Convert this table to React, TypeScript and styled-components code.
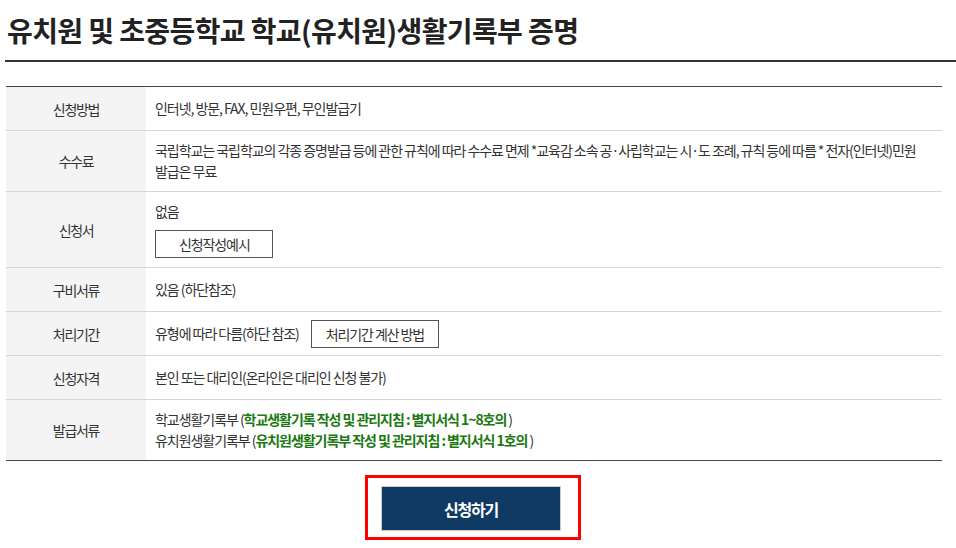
import React from 'react';
import styled, { createGlobalStyle } from 'styled-components';

const GlobalStyle = createGlobalStyle`
  html, body {
    margin: 0;
    padding: 0;
    background: #fff;
  }
  body {
    font-family: "Noto Sans CJK KR", "Noto Sans", sans-serif;
    color: #333;
  }
`;

const Page = styled.div`
  padding: 0 0 0 5px;
  overflow: hidden;
`;

const Title = styled.h2`
  margin: 0;
  padding: 10px 0 0 2px;
  height: 50px;
  font-size: 28px;
  font-weight: 700;
  letter-spacing: -0.6px;
  line-height: 40px;
  color: #222;
  border-bottom: 2px solid #333;
`;

const Table = styled.table`
  margin: 24px 0 0 1px;
  width: 936px;
  border-collapse: collapse;
  border-top: 1px solid #444;
  border-bottom: 1px solid #444;
  font-size: 14px;
  letter-spacing: -1.05px;
`;

const Row = styled.tr`
  & + & {
    border-top: 1px solid #d6d6d6;
  }
`;

const Label = styled.th`
  width: 140px;
  height: 43px;
  padding: 0;
  background: #f4f4f4;
  font-weight: 400;
  color: #333;
  text-align: center;
  vertical-align: middle;
  letter-spacing: -1.3px;
`;

const Cell = styled.td<{ $tight?: boolean }>`
  padding: ${(p) => (p.$tight ? '7px 9px' : '9px 9px')};
  line-height: 21px;
  color: #333;
  text-align: left;
  vertical-align: middle;
`;

const Line = styled.div`
  display: flex;
  align-items: center;
  gap: 12px;
`;

const OutlineButton = styled.button<{ $top?: number; $wide?: boolean }>`
  display: inline-flex;
  align-items: center;
  justify-content: center;
  height: 28px;
  padding: ${(p) => (p.$wide ? '0 22px 0 23px' : '0 14px')};
  margin-top: ${(p) => p.$top ?? 0}px;
  border: 1px solid #555;
  background: #fff;
  font-family: inherit;
  font-size: 14px;
  letter-spacing: -1.1px;
  color: #333;
  cursor: pointer;
`;

const Green = styled.strong`
  color: #1b7a12;
  font-weight: 700;
`;

const Footer = styled.div`
  width: 936px;
  display: flex;
  justify-content: center;
  padding-top: 14px;
`;

const Highlight = styled.div`
  border: 3px solid #f00;
  padding: 8px 17px 6px 13px;
`;

const SubmitButton = styled.button`
  width: 180px;
  height: 45px;
  border: 1px solid #ccc;
  background: #0f3a63;
  color: #fff;
  font-family: inherit;
  font-size: 16px;
  font-weight: 700;
  letter-spacing: -1.2px;
  cursor: pointer;
`;

export default function App() {
  return (
    <Page>
      <GlobalStyle />
      <Title>유치원 및 초중등학교 학교(유치원)생활기록부 증명</Title>
      <Table>
        <tbody>
          <Row>
            <Label>신청방법</Label>
            <Cell>인터넷, 방문, FAX, 민원우편, 무인발급기</Cell>
          </Row>
          <Row>
            <Label>수수료</Label>
            <Cell>
              국립학교는 국립학교의 각종 증명발급 등에 관한 규칙에 따라 수수료 면제 *교육감 소속 공·사립학교는 시·도 조례, 규칙 등에 따름 * 전자(인터넷)민원
              <br />
              발급은 무료
            </Cell>
          </Row>
          <Row>
            <Label>신청서</Label>
            <Cell>
              <div>없음</div>
              <OutlineButton $top={8} $wide>신청작성예시</OutlineButton>
            </Cell>
          </Row>
          <Row>
            <Label>구비서류</Label>
            <Cell>있음 (하단참조)</Cell>
          </Row>
          <Row>
            <Label>처리기간</Label>
            <Cell $tight>
              <Line>
                <span>유형에 따라 다름(하단 참조)</span>
                <OutlineButton>처리기간 계산 방법</OutlineButton>
              </Line>
            </Cell>
          </Row>
          <Row>
            <Label>신청자격</Label>
            <Cell>본인 또는 대리인(온라인은 대리인 신청 불가)</Cell>
          </Row>
          <Row>
            <Label>발급서류</Label>
            <Cell>
              <div>
                학교생활기록부 (<Green>학교생활기록 작성 및 관리지침 : 별지서식 1~8호의</Green> )
              </div>
              <div>
                유치원생활기록부 (<Green>유치원생활기록부 작성 및 관리지침 : 별지서식 1호의</Green> )
              </div>
            </Cell>
          </Row>
        </tbody>
      </Table>
      <Footer>
        <Highlight>
          <SubmitButton>신청하기</SubmitButton>
        </Highlight>
      </Footer>
    </Page>
  );
}
